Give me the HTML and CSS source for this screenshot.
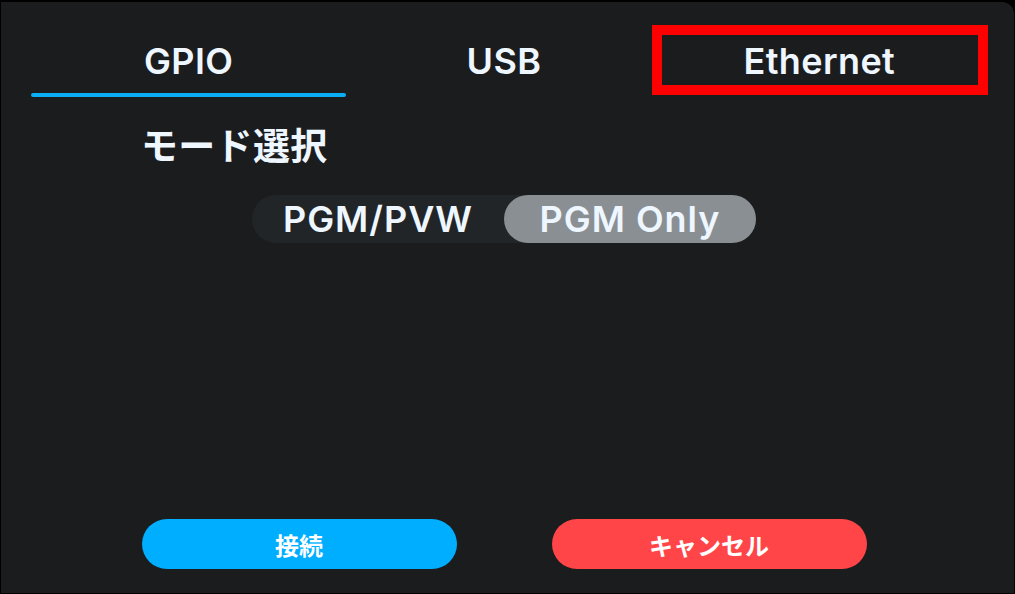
FILE: index.html
```html
<!DOCTYPE html>
<html lang="ja">
<head>
<meta charset="utf-8">
<title>接続設定</title>
<link rel="stylesheet" href="styles.css">
</head>
<body>
<div class="panel">
  <nav class="tabs">
    <div class="tab active"><span class="tab-label">GPIO</span><span class="tab-bar"></span></div>
    <div class="tab"><span class="tab-label">USB</span><span class="tab-bar"></span></div>
    <div class="tab"><span class="tab-label">Ethernet</span><span class="tab-bar"></span><span class="highlight"></span></div>
  </nav>
  <h2 class="section-title">モード選択</h2>
  <div class="segmented">
    <div class="segment">PGM/PVW</div>
    <div class="segment selected">PGM Only</div>
  </div>
  <div class="actions">
    <button class="btn btn-connect">接続</button>
    <button class="btn btn-cancel">キャンセル</button>
  </div>
</div>
</body>
</html>
```

FILE: styles.css
```css
html, body {
  margin: 0;
  padding: 0;
  background: #000;
}

body {
  width: 1015px;
  height: 594px;
  overflow: hidden;
  font-family: Inter, "Noto Sans CJK JP", sans-serif;
}

.panel {
  margin: 2px 1px 1px 1px;
  height: 591px;
  box-sizing: border-box;
  background: #1b1c1e;
  border-radius: 0 12px 0 0;
  padding: 37px 37px 24px 30px;
  display: flex;
  flex-direction: column;
}

.tabs {
  display: grid;
  grid-template-columns: 1fr 1fr 1fr;
}

.tab {
  position: relative;
  display: flex;
  flex-direction: column;
  align-items: center;
}

.tab-label {
  font-family: Inter, sans-serif;
  font-weight: 600;
  font-size: 36px;
  line-height: 44px;
  letter-spacing: 0.4px;
  color: #eef6ff;
}

.tab-bar {
  margin-top: 10px;
  width: 100%;
  height: 4px;
  border-radius: 2px;
  background: transparent;
}

.tab.active .tab-bar {
  background: #0aaef5;
}

.highlight {
  position: absolute;
  left: -10px;
  top: -14px;
  width: 336px;
  height: 70px;
  box-sizing: border-box;
  border: 10px solid #ff0000;
}

.section-title {
  margin: 29px 0 0 110px;
  font-family: "Noto Sans CJK JP", sans-serif;
  font-weight: 700;
  font-size: 37px;
  line-height: 37px;
  letter-spacing: 0.3px;
  color: #eef6ff;
}

.segmented {
  margin: 32px auto 0;
  width: 504px;
  height: 48px;
  border-radius: 24px;
  background: #222527;
  display: grid;
  grid-template-columns: 1fr 1fr;
}

.segment {
  border-radius: 24px;
  font-family: Inter, sans-serif;
  font-weight: 600;
  font-size: 36px;
  line-height: 48px;
  letter-spacing: 1px;
  text-align: center;
  color: #eef6ff;
}

.segment.selected {
  background: #8a8f93;
}

.actions {
  margin-top: auto;
  display: flex;
  justify-content: center;
  gap: 95px;
}

.btn {
  width: 315px;
  height: 50px;
  border: none;
  border-radius: 25px;
  padding: 0;
  font-family: "Noto Sans CJK JP", sans-serif;
  font-weight: 700;
  font-size: 24px;
  color: #ffffff;
  cursor: pointer;
}

.btn-connect {
  background: #00aeff;
}

.btn-cancel {
  background: #ff4548;
}
```
